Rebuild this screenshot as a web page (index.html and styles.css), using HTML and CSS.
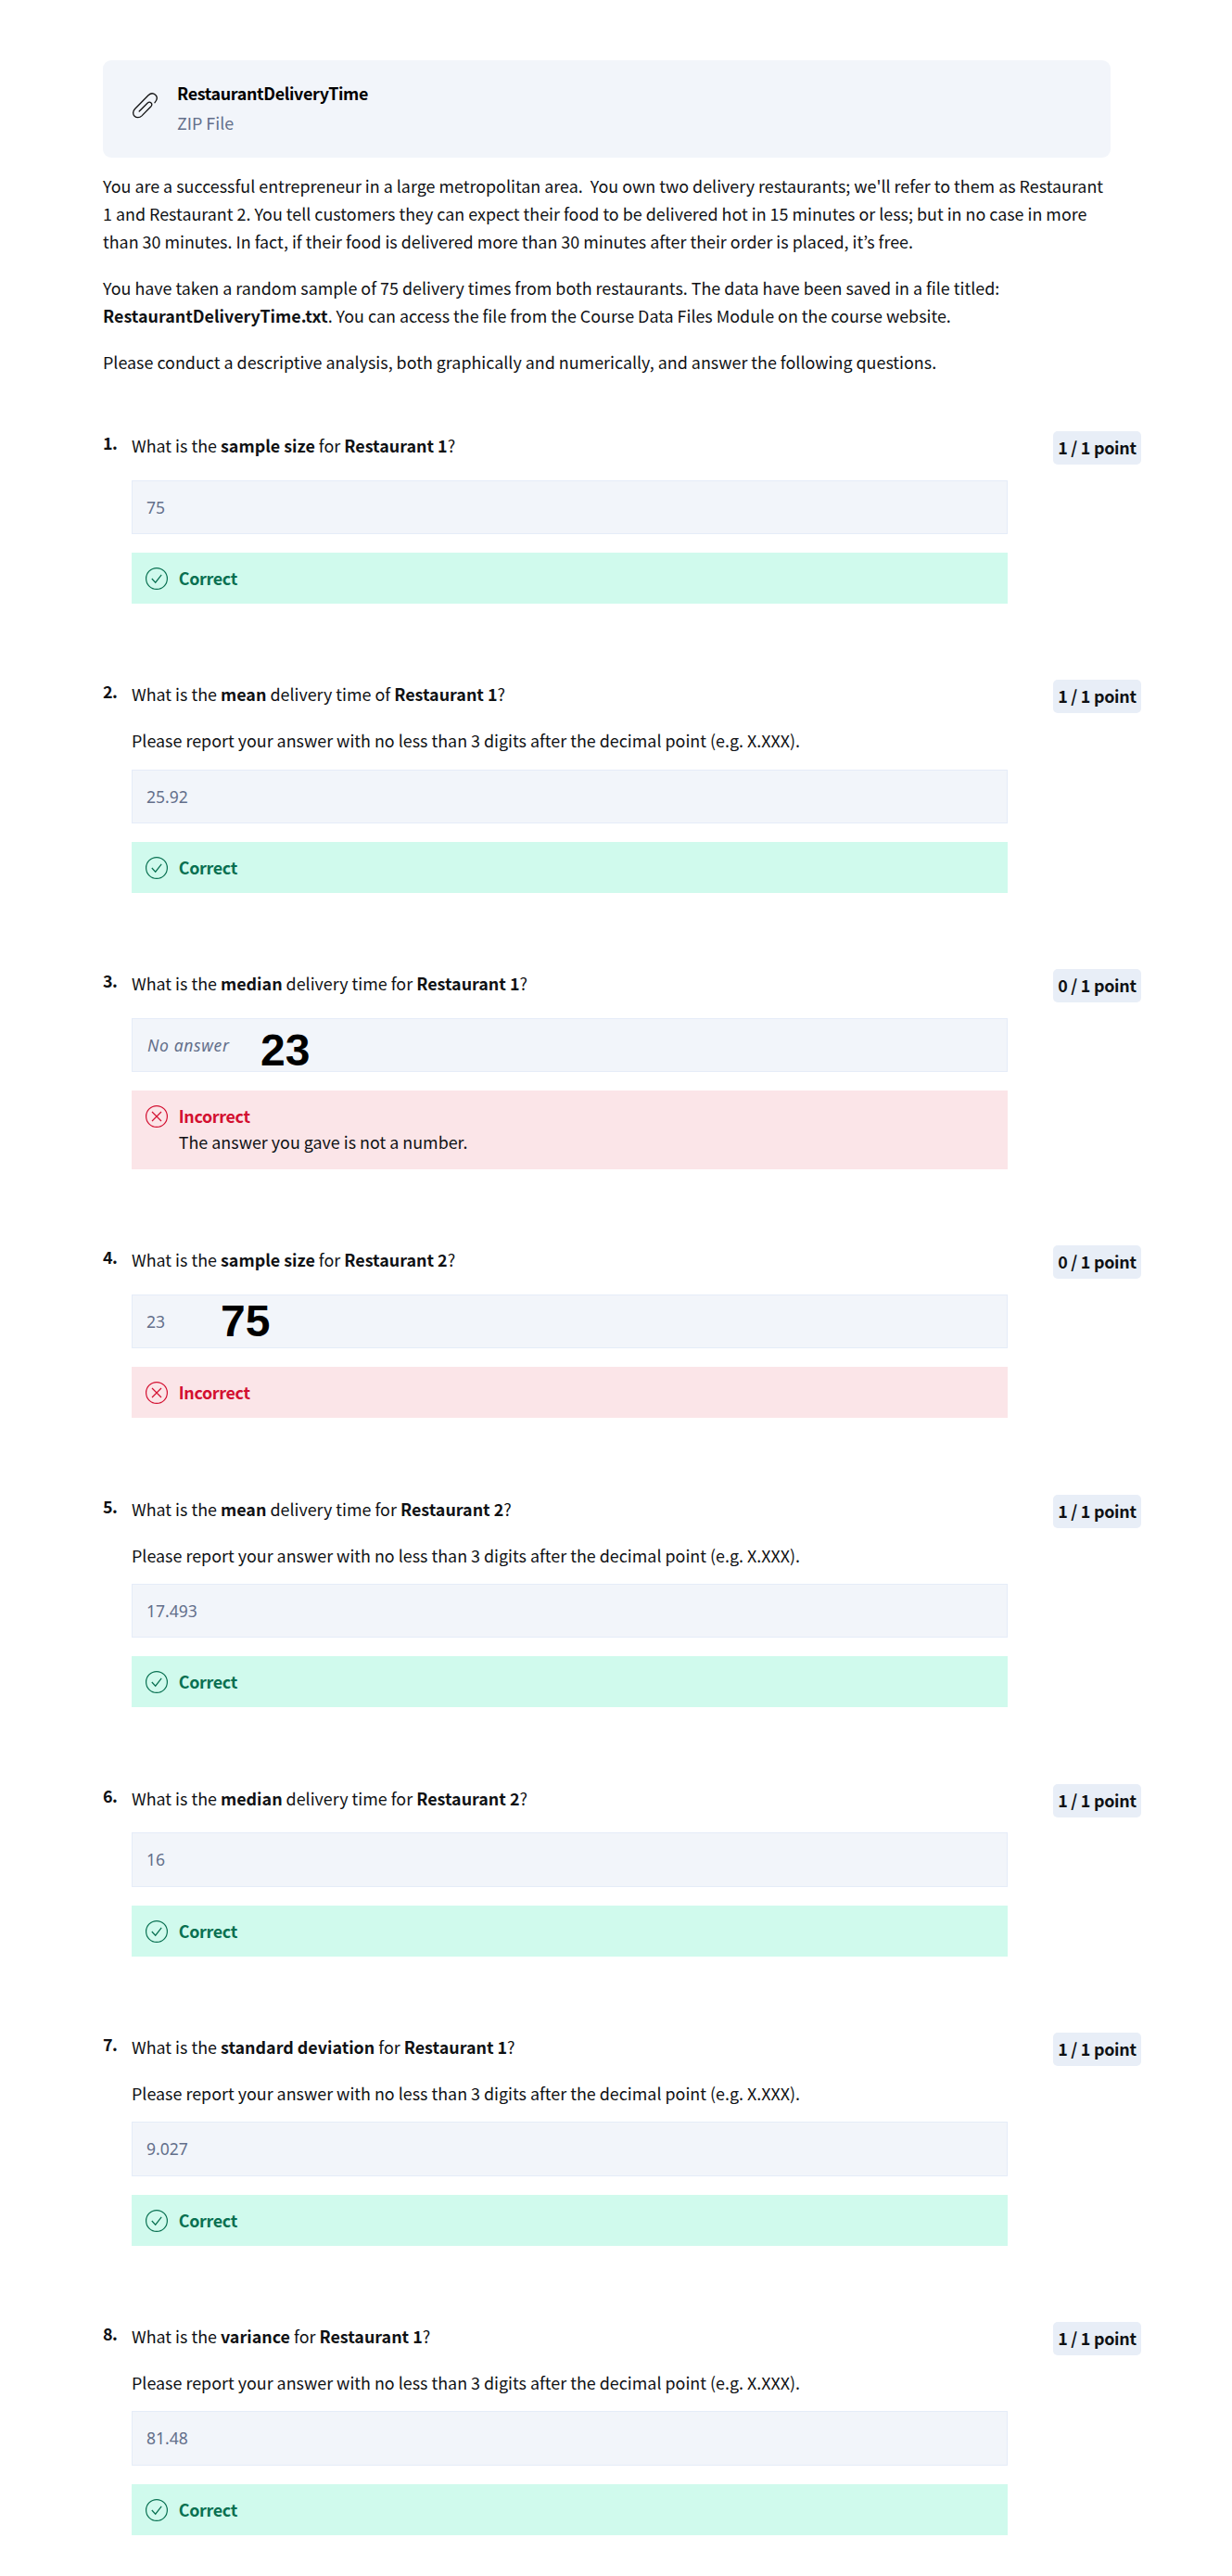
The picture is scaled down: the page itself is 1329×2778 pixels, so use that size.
FILE: index.html
```html
<!DOCTYPE html>
<html lang="en">
<head>
<meta charset="utf-8">
<title>Restaurant Delivery Time</title>
<link rel="stylesheet" href="styles.css">
</head>
<body>
<svg class="defs" width="0" height="0">
  <symbol id="ok" viewBox="0 0 24 24"><circle cx="12" cy="12" r="11.4"/><path d="M6.8 12l3.9 4.2 6.5-8.4"/></symbol>
  <symbol id="bad" viewBox="0 0 24 24"><circle cx="12" cy="12" r="11.4"/><path d="M7 7l10 10M17 7L7 17"/></symbol>
</svg>
<main class="page">
  <div class="file">
    <svg class="clip" viewBox="0 0 30 30"><path d="M8.2 21L17 12.3c1.4-1.3 3-1.3 4-.3s1 2.600-.3 4L11 25.900c-2.500 2.400-5.900 2.300-7.900.4s-2-5.300.4-7.800L18 3.800c2.600-2.500 5.500-2.400 7.600-.5 2.200 2 2.300 5-.6 8.400"/></svg>
    <div><div class="file-name">RestaurantDeliveryTime</div><div class="file-type">ZIP File</div></div>
  </div>
  <div class="intro">
    <p>You are a successful entrepreneur in a large metropolitan area.&nbsp; You own two delivery restaurants; we'll refer to them as Restaurant<br>1 and Restaurant 2. You tell customers they can expect their food to be delivered hot in 15 minutes or less; but in no case in more<br>than 30 minutes. In fact, if their food is delivered more than 30 minutes after their order is placed, it’s free.</p>
    <p>You have taken a random sample of 75 delivery times from both restaurants. The data have been saved in a file titled:<br><b>RestaurantDeliveryTime.txt</b>. You can access the file from the Course Data Files Module on the course website.</p>
    <p>Please conduct a descriptive analysis, both graphically and numerically, and answer the following questions.</p>
  </div>
  <section class="q"><div class="num">1.</div><div class="body"><p>What is the <b>sample size</b> for <b>Restaurant 1</b>?</p><div class="answer">75</div><div class="fb ok"><svg><use href="#ok"/></svg><div><b>Correct</b></div></div></div><div class="pts">1 / 1 point</div></section>
  <section class="q hint"><div class="num">2.</div><div class="body"><p>What is the <b>mean</b> delivery time of <b>Restaurant 1</b>?</p><p>Please report your answer with no less than 3 digits after the decimal point (e.g. X.XXX).</p><div class="answer">25.92</div><div class="fb ok"><svg><use href="#ok"/></svg><div><b>Correct</b></div></div></div><div class="pts">1 / 1 point</div></section>
  <section class="q"><div class="num">3.</div><div class="body"><p>What is the <b>median</b> delivery time for <b>Restaurant 1</b>?</p><div class="answer"><i>No answer</i><span class="note n23">23</span></div><div class="fb bad"><svg><use href="#bad"/></svg><div><b>Incorrect</b><div class="why">The answer you gave is not a number.</div></div></div></div><div class="pts">0 / 1 point</div></section>
  <section class="q"><div class="num">4.</div><div class="body"><p>What is the <b>sample size</b> for <b>Restaurant 2</b>?</p><div class="answer">23<span class="note n75">75</span></div><div class="fb bad"><svg><use href="#bad"/></svg><div><b>Incorrect</b></div></div></div><div class="pts">0 / 1 point</div></section>
  <section class="q hint"><div class="num">5.</div><div class="body"><p>What is the <b>mean</b> delivery time for <b>Restaurant 2</b>?</p><p>Please report your answer with no less than 3 digits after the decimal point (e.g. X.XXX).</p><div class="answer">17.493</div><div class="fb ok"><svg><use href="#ok"/></svg><div><b>Correct</b></div></div></div><div class="pts">1 / 1 point</div></section>
  <section class="q"><div class="num">6.</div><div class="body"><p>What is the <b>median</b> delivery time for <b>Restaurant 2</b>?</p><div class="answer">16</div><div class="fb ok"><svg><use href="#ok"/></svg><div><b>Correct</b></div></div></div><div class="pts">1 / 1 point</div></section>
  <section class="q hint"><div class="num">7.</div><div class="body"><p>What is the <b>standard deviation</b> for <b>Restaurant 1</b>?</p><p>Please report your answer with no less than 3 digits after the decimal point (e.g. X.XXX).</p><div class="answer">9.027</div><div class="fb ok"><svg><use href="#ok"/></svg><div><b>Correct</b></div></div></div><div class="pts">1 / 1 point</div></section>
  <section class="q hint"><div class="num">8.</div><div class="body"><p>What is the <b>variance</b> for <b>Restaurant 1</b>?</p><p>Please report your answer with no less than 3 digits after the decimal point (e.g. X.XXX).</p><div class="answer">81.48</div><div class="fb ok"><svg><use href="#ok"/></svg><div><b>Correct</b></div></div></div><div class="pts">1 / 1 point</div></section>
</main>
</body>
</html>
```
FILE: styles.css
```css
* { box-sizing: border-box; }
body { margin: 0; background: #fff; color: #0f1114; font: 17.9px/30px "Noto Sans CJK KR", sans-serif; }
p { margin: 0; white-space: nowrap; }
b { font-weight: 700; }
.defs { display: none; }
.page { width: 1120px; margin-left: 111px; padding-top: 65px; }
.file { display: flex; width: 1087px; height: 105px; border-radius: 9px; background: #f2f5fa; padding: 20px 31px; }
.clip { width: 30px; height: 30px; margin: 14px 19px 0 0; fill: none; stroke: #111; stroke-width: 1.3; stroke-linecap: round; }
.file-name { font-weight: 700; line-height: 31px; color: #000; letter-spacing: -0.35px; }
.file-type { line-height: 32px; color: #636f8a; }
.intro { padding-top: 15px; height: 295px; }
.intro p { margin-bottom: 20px; }
.q { display: grid; grid-template-columns: 31px 945px 1fr; align-items: start; margin-bottom: 82.2px; }
.num { font-weight: 700; line-height: 24px; letter-spacing: -0.5px; }
.body p { height: 30px; margin-bottom: 22.55px; }
.hint .body p { margin-bottom: 16.55px; }
.hint .body p:first-child { margin-bottom: 20px; }
.pts { justify-self: end; width: 95px; height: 36px; border-radius: 5px; background: #e8eef7; text-align: center; font-weight: 700; line-height: 35px; letter-spacing: -0.25px; white-space: nowrap; }
.answer { position: relative; height: 58.4px; border: 1px solid #e5ecf8; background: #f2f5fa; padding-left: 15px; font: 17.5px/56px "Noto Sans", sans-serif; color: #636f8a; }
.answer i { margin-left: 1px; letter-spacing: 0.65px; }
.note { position: absolute; font: bold 48px/48px "Liberation Sans", Arial, sans-serif; color: #000; }
.n23 { left: 138px; top: 10px; }
.n75 { left: 95px; top: 4px; }
.fb { display: flex; margin-top: 20px; height: 55px; padding: 13px 15px; line-height: 28px; }
.fb svg { width: 24px; height: 24px; margin: 3px 11.5px 0 0.3px; fill: none; stroke: currentColor; stroke-width: 1.2; }
.fb b { letter-spacing: -0.35px; }
.fb.ok { background: #d0faed; color: #087051; }
.fb.bad { background: #fbe5e8; color: #d30f30; }
.fb:has(.why) { height: 85px; }
.why { color: #0f1114; }
```
